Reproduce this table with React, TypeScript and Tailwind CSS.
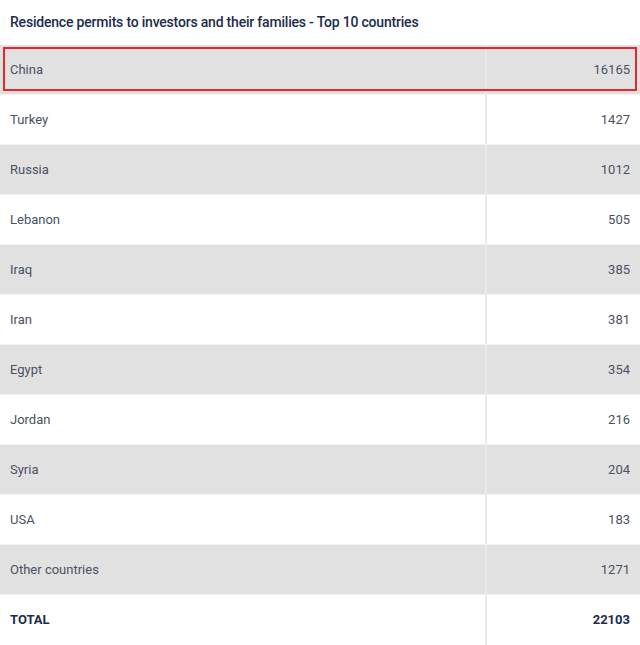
import React from "react";

const rows: [string, string][] = [
  ["China", "16165"],
  ["Turkey", "1427"],
  ["Russia", "1012"],
  ["Lebanon", "505"],
  ["Iraq", "385"],
  ["Iran", "381"],
  ["Egypt", "354"],
  ["Jordan", "216"],
  ["Syria", "204"],
  ["USA", "183"],
  ["Other countries", "1271"],
];

export default function App() {
  return (
    <div
      className="w-[640px] h-[645px] bg-white overflow-hidden"
      style={{ fontFamily: "Roboto, 'Liberation Sans', sans-serif" }}
    >
      <div className="h-[45px] flex items-center pl-[10px] text-[14px] font-medium text-[#1d2b4c] tracking-[-0.2px]">
        Residence permits to investors and their families - Top 10 countries
      </div>
      <div className="flex flex-col">
        {rows.map(([name, val], i) => (
          <div
            key={name}
            className={`relative grid grid-cols-[487px_1fr] h-[50px] border-b border-[#f3f3f3] ${
              i % 2 === 0 ? "bg-[#e1e1e1]" : "bg-white"
            }`}
          >
            <div className="flex items-center pl-[10px] text-[13px] text-[#4a5163] border-r-2 border-[#e9e9e9]">
              {name}
            </div>
            <div className="flex items-center justify-end pr-[10px] text-[13px] text-[#4a5163]">
              {val}
            </div>
            {i === 0 && (
              <div className="absolute left-[3px] right-[3px] top-[2px] bottom-[3px] border-2 border-[#e8252a]" />
            )}
          </div>
        ))}
        <div className="grid grid-cols-[487px_1fr] h-[50px] bg-white">
          <div className="flex items-center pl-[10px] text-[13px] font-bold text-[#1d2b4c] border-r-2 border-[#e9e9e9]">
            TOTAL
          </div>
          <div className="flex items-center justify-end pr-[10px] text-[13px] font-bold text-[#1d2b4c]">
            22103
          </div>
        </div>
      </div>
    </div>
  );
}
